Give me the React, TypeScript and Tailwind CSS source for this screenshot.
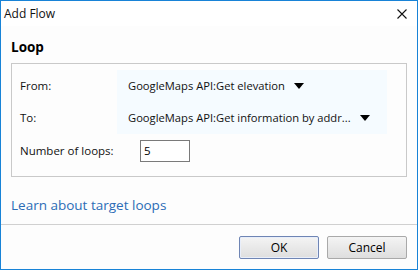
import React from 'react';

const font = { fontFamily: '"Open Sans", "Noto Sans", sans-serif' };

function Caret() {
    return (
        <svg width="10" height="6" viewBox="0 0 10 6" className="ml-[9px] shrink-0">
            <polygon points="0,0 10,0 5,6" fill="#000" />
        </svg>
    );
}

function ActionPicker({ value }: { value: string }) {
    return (
        <div className="flex items-center h-[32px] pl-[11px] text-[11.2px] text-[#111]">
            <span className="whitespace-nowrap">{value}</span>
            <Caret />
        </div>
    );
}

export default function App() {
    return (
        <div style={font} className="w-[418px] h-[270px] border border-[#1883d7] bg-[#fdfdfd] flex flex-col text-black">
            {/* title bar */}
            <div className="h-[25px] bg-white flex items-center justify-between pl-[3px] pr-[10px]">
                <span className="text-[12px] text-[#111]">Add Flow</span>
                <svg width="10" height="10" viewBox="0 0 10 10">
                    <path d="M0.5 0.5 L9.5 9.5 M9.5 0.5 L0.5 9.5" stroke="#111" strokeWidth="1.1" />
                </svg>
            </div>

            <div className="px-[10px] flex-1 flex flex-col">
                <h2 className="mt-[12px] text-[13.5px] font-bold leading-[18px]">Loop</h2>

                <div className="mt-[7px] border border-[#c9c9c9] h-[114px] pt-[6px]">
                    <div className="grid grid-cols-[105px_270px]">
                        <div className="flex items-center h-[32px] pl-[8px] text-[11.5px] text-[#111]">From:</div>
                        <div className="bg-[#f5fbff]">
                            <ActionPicker value="GoogleMaps API:Get elevation" />
                        </div>
                        <div className="flex items-center h-[32px] pl-[8px] text-[11.5px] text-[#111]">To:</div>
                        <div className="bg-[#f5fbff]">
                            <ActionPicker value="GoogleMaps API:Get information by addr..." />
                        </div>
                        <div className="flex items-center h-[33px] pl-[8px] text-[11.5px] text-[#111] whitespace-nowrap">Number of loops:</div>
                        <div className="flex items-center h-[33px] pl-[23px]">
                            <input
                                defaultValue="5"
                                className="w-[50px] h-[22px] border border-[#7a7a7a] bg-white px-[3px] text-[11.5px] outline-none"
                                style={font}
                            />
                        </div>
                    </div>
                </div>

                <a className="mt-[18px] text-[13.5px] text-[#2b6cb6] leading-[20px] cursor-pointer">Learn about target loops</a>
            </div>

            {/* footer */}
            <div className="border-t border-[#d0d0d0] h-[45px] flex items-start justify-end gap-[8px] pt-[11px] pr-[10px]">
                <button className="w-[80px] h-[23px] border border-[#6f85b4] rounded-[2px] bg-gradient-to-b from-[#f4f4f4] to-[#dedede] text-[12px] shadow-[inset_0_0_0_1px_#e8eefa]">
                    OK
                </button>
                <button className="w-[80px] h-[23px] border border-[#a9a9a9] rounded-[2px] bg-gradient-to-b from-[#f4f4f4] to-[#dedede] text-[12px]">
                    Cancel
                </button>
            </div>
        </div>
    );
}
